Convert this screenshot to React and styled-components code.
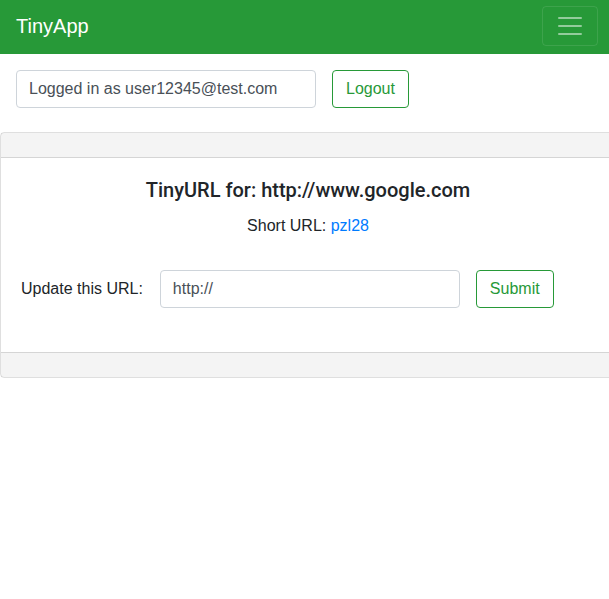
import React from "react";
import styled, { createGlobalStyle } from "styled-components";

const GlobalStyle = createGlobalStyle`
  body {
    margin: 0;
    font-family: "Liberation Sans", Arial, sans-serif;
    font-size: 16px;
    line-height: 1.5;
    color: #212529;
    background: #fff;
    overflow: hidden;
  }
`;

const green = "#279938";

const Navbar = styled.nav`
  height: 54px;
  background: ${green};
  display: flex;
  align-items: center;
  justify-content: space-between;
  padding: 0 11px 2px 16px;
  box-sizing: border-box;
`;

const Brand = styled.a`
  color: #fff;
  font-size: 20px;
  line-height: 30px;
  text-decoration: none;
`;

const Toggler = styled.button`
  width: 56px;
  height: 40px;
  padding: 4px 12px;
  background: transparent;
  border: 1px solid rgba(255, 255, 255, 0.1);
  border-radius: 4px;
  display: flex;
  align-items: center;
  justify-content: center;
`;

const Row = styled.form`
  display: flex;
  align-items: center;
  gap: 16px;
  padding: ${(p) => p.$pad || "0"};
`;

const Input = styled.input`
  width: 300px;
  height: 38px;
  box-sizing: border-box;
  padding: 6px 12px;
  font-family: inherit;
  font-size: 16px;
  color: #495057;
  border: 1px solid #ced4da;
  border-radius: 4px;
  background: #fff;
  outline: none;
  &::placeholder {
    color: #495057;
  }
`;

const OutlineButton = styled.button`
  height: 38px;
  box-sizing: border-box;
  padding: 6px 13px;
  font-family: inherit;
  font-size: 16px;
  color: ${green};
  background: #fff;
  border: 1px solid ${green};
  border-radius: 4px;
`;

const Card = styled.section`
  margin-top: 24px;
  width: 616px;
  border: 1px solid rgba(0, 0, 0, 0.125);
  border-radius: 4px;
  box-sizing: border-box;
`;

const CardBand = styled.div`
  height: 24px;
  background: rgba(0, 0, 0, 0.045);
  border-${(p) => (p.$bottom ? "top" : "bottom")}: 1px solid rgba(0, 0, 0, 0.125);
`;

const CardBody = styled.div`
  padding: 20px 20px 44px;
  text-align: center;
`;

const Title = styled.h5`
  margin: 0 0 12px;
  font-family: Roboto, "Liberation Sans", sans-serif;
  font-size: 20px;
  font-weight: 500;
  line-height: 24px;
`;

const Short = styled.p`
  margin: 0 0 32px;
  line-height: 24px;
  a {
    color: #007bff;
    text-decoration: none;
  }
`;

const Label = styled.label`
  line-height: 24px;
  margin-right: 1px;
`;

export default function App() {
  return (
    <>
      <GlobalStyle />
      <Navbar>
        <Brand href="#">TinyApp</Brand>
        <Toggler type="button" aria-label="Toggle navigation">
          <svg width="30" height="30" viewBox="0 0 30 30">
            <path
              d="M4 7h22M4 15h22M4 23h22"
              stroke="rgba(255,255,255,0.5)"
              strokeWidth="2"
              strokeLinecap="round"
            />
          </svg>
        </Toggler>
      </Navbar>
      <Row $pad="16px 16px 0">
        <Input readOnly value="Logged in as user12345@test.com" />
        <OutlineButton type="button">Logout</OutlineButton>
      </Row>
      <Card>
        <CardBand />
        <CardBody>
          <Title>TinyURL for: http://www.google.com</Title>
          <Short>
            Short URL: <a href="#">pzl28</a>
          </Short>
          <Row>
            <Label>Update this URL:</Label>
            <Input placeholder="http://" />
            <OutlineButton type="button">Submit</OutlineButton>
          </Row>
        </CardBody>
        <CardBand $bottom />
      </Card>
    </>
  );
}
